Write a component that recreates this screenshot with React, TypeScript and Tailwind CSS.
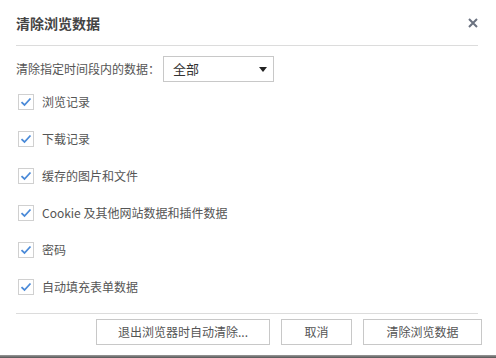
import React from "react";

const items = [
  "浏览记录",
  "下载记录",
  "缓存的图片和文件",
  "Cookie 及其他网站数据和插件数据",
  "密码",
  "自动填充表单数据",
];

function Check() {
  return (
    <div className="w-[16px] h-[16px] border border-[#d0d0d0] bg-white flex items-center justify-center shrink-0">
      <svg width="12" height="10" viewBox="0 0 12 10">
        <path d="M1.5 5.2 L4.5 8 L10.5 1.5" fill="none" stroke="#4a8ad8" strokeWidth="1.8" />
      </svg>
    </div>
  );
}

export default function App() {
  return (
    <div
      className="w-[496px] h-[358px] bg-white flex flex-col overflow-hidden text-[#333]"
      style={{ fontFamily: '"Noto Sans CJK SC", "Noto Sans", sans-serif' }}
    >
      <div className="flex items-center justify-between pl-[16px] pr-[18px] h-[44px] mt-[1px]">
        <div className="text-[14px] font-bold text-[#444] leading-none">清除浏览数据</div>
        <svg width="10" height="10" viewBox="0 0 10 10">
          <path d="M1 1 L9 9 M9 1 L1 9" stroke="#6b7280" strokeWidth="2" />
        </svg>
      </div>
      <div className="ml-[16px] mr-[18px] h-px bg-[#dcdcdc]" />
      <div className="flex items-center pl-[16px] mt-[10px] h-[26px]">
        <span className="text-[12px] text-[#555]">清除指定时间段内的数据：</span>
        <div className="ml-[3px] w-[111px] h-[26px] border border-[#c8c8c8] flex items-center justify-between pl-[9px] pr-[6px]">
          <span className="text-[13px] text-[#333]">全部</span>
          <svg width="8" height="5" viewBox="0 0 8 5">
            <path d="M0 0 H8 L4 5 Z" fill="#222" />
          </svg>
        </div>
      </div>
      <div className="flex flex-col pl-[18px] mt-[1px]">
        {items.map((t) => (
          <div key={t} className="flex items-center gap-[8px] h-[37px]">
            <Check />
            <span className="text-[12px] text-[#555]">{t}</span>
          </div>
        ))}
      </div>
      <div className="ml-[16px] mr-[18px] h-px bg-[#dcdcdc] mt-[8px]" />
      <div className="flex justify-end gap-[11px] pr-[14px] mt-[5px]">
        <button className="w-[174px] h-[26px] border border-[#c8c8c8] bg-white text-[12px] text-[#555]">退出浏览器时自动清除...</button>
        <button className="w-[71px] h-[26px] border border-[#c8c8c8] bg-white text-[12px] text-[#555]">取消</button>
        <button className="w-[119px] h-[26px] border border-[#c8c8c8] bg-white text-[12px] text-[#555]">清除浏览数据</button>
      </div>
      <div className="mt-auto h-[3px] bg-gradient-to-b from-[#9a9a9a] to-[#555]" />
    </div>
  );
}
